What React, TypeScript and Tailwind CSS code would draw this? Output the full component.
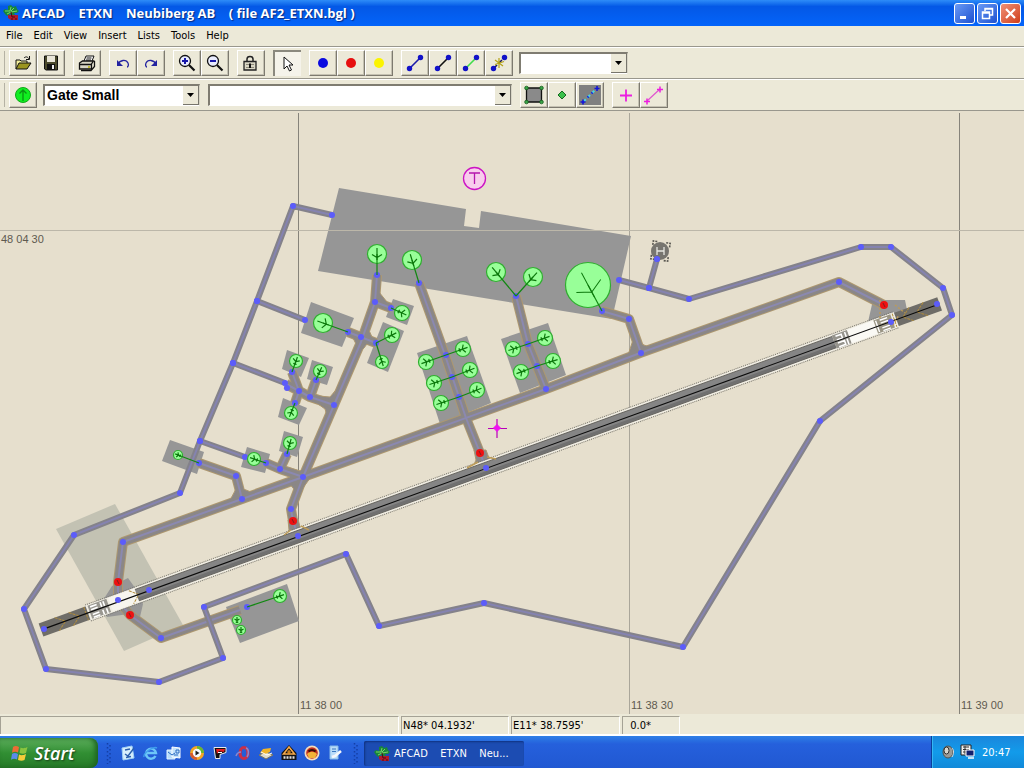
import React from "react";

type Point = [number, number];

const toPoints = (pts: Point[]) => pts.map((p) => p.join(",")).join(" ");

/* ---------- Map data ---------- */

const aprons: Point[][] = [
  [[339, 188], [466, 209], [464, 226], [479, 228], [481, 211], [631, 236], [612, 319], [318, 271]],
  [[311, 302], [354, 318], [342, 347], [301, 333]],
  [[393, 299], [414, 306], [407, 325], [386, 317]],
  [[383, 322], [404, 331], [388, 372], [367, 363]],
  [[417, 353], [467, 336], [491, 403], [440, 424]],
  [[501, 339], [548, 323], [566, 375], [520, 393]],
  [[287, 350], [309, 358], [301, 377], [282, 369]],
  [[312, 360], [333, 367], [327, 385], [307, 379]],
  [[283, 398], [307, 408], [299, 425], [278, 417]],
  [[284, 431], [303, 437], [297, 457], [279, 451]],
  [[247, 447], [270, 454], [265, 473], [241, 467]],
  [[170, 440], [204, 452], [197, 474], [162, 461]],
  [[226, 607], [287, 584], [299, 621], [240, 643], [229, 616]],
  [[873, 300], [905, 300], [907, 310], [896, 322], [868, 322]],
  [[112, 586], [128, 578], [138, 592], [143, 604], [140, 617], [129, 614], [107, 617], [100, 605]],
];

const taxiways: Point[][] = [
  [[118, 600], [118, 582], [123, 542], [242, 499], [303, 477], [546, 389], [640, 353], [839, 282], [884, 305]],
  [[118, 600], [130, 615], [161, 638], [240, 610]],
  [[298, 536], [293, 521], [291, 509], [303, 477], [334, 405], [361, 342], [375, 302], [377, 275]],
  [[375, 302], [391, 308]],
  [[348, 332], [376, 343]],
  [[419, 283], [445, 355], [466, 418], [480, 453], [486, 468]],
  [[516, 296], [528, 344], [546, 389]],
  [[602, 311], [629, 319], [641, 353]],
  [[334, 405], [310, 397], [299, 391], [286, 384]],
  [[292, 372], [299, 391], [295, 403]],
  [[310, 397], [316, 380]],
  [[303, 477], [280, 469], [266, 463]],
  [[280, 469], [287, 454]],
  [[242, 499], [236, 476], [199, 463]],
];

const fillets: Point[][] = [
  [[319, 396], [330, 397], [335, 391], [334, 405], [328, 419], [325, 409], [318, 404]],
  [[290, 468], [300, 471], [309, 462], [313, 474], [303, 488], [297, 493], [289, 483]],
  [[633, 340], [627, 358], [641, 356], [654, 349], [644, 345]],
  [[237, 487], [228, 504], [242, 502], [256, 494], [246, 490]],
  [[379, 292], [387, 302], [376, 309], [370, 319], [372, 302]],
  [[368, 328], [372, 337], [364, 348], [354, 358], [356, 344], [352, 336]],
  [[474, 450], [486, 450], [489, 458], [494, 461], [472, 469], [476, 460]],
  [[288, 520], [298, 519], [300, 527], [307, 531], [286, 538], [289, 530]],
];

const roads: Point[][] = [
  [
    [332, 215], [293, 206], [257, 301], [233, 363], [200, 441], [180, 493], [74, 535], [24, 609],
    [46, 669], [159, 682], [223, 658], [204, 607], [346, 554], [379, 626], [484, 603], [683, 647],
    [820, 421], [952, 315], [943, 288], [891, 247], [861, 247], [689, 299], [649, 288], [619, 280],
  ],
  [[649, 288], [657, 259]],
  [[257, 301], [305, 320]],
  [[233, 363], [285, 383]],
  [[200, 441], [245, 457]],
];

const nodes: Point[] = [
  ...roads.flat(),
  [123, 542], [242, 499], [303, 477], [546, 389], [641, 353], [839, 282], [161, 638], [247, 607],
  [298, 536], [291, 509], [334, 405], [361, 337], [375, 302], [377, 275], [391, 308], [348, 332],
  [376, 343], [419, 283], [446, 355], [452, 377], [459, 397], [486, 468], [516, 296], [528, 344],
  [537, 366], [602, 311], [629, 319], [310, 397], [299, 391], [287, 388], [292, 372], [295, 403],
  [316, 380], [280, 469], [266, 463], [287, 454], [236, 476], [199, 463], [118, 600], [149, 590],
  [44, 629], [937, 304], [891, 322],
];

const holdShorts: Point[] = [[118, 582], [130, 615], [293, 521], [480, 453], [884, 305]];

const parkings: { at: Point; r: number; link?: Point }[] = [
  { at: [377, 254], r: 10, link: [377, 275] },
  { at: [412, 260], r: 10, link: [419, 283] },
  { at: [496, 272], r: 10, link: [516, 296] },
  { at: [533, 277], r: 10, link: [516, 296] },
  { at: [588, 285], r: 23, link: [602, 311] },
  { at: [323, 323], r: 10, link: [348, 332] },
  { at: [402, 313], r: 8, link: [391, 308] },
  { at: [392, 335], r: 8, link: [376, 343] },
  { at: [382, 362], r: 7, link: [376, 343] },
  { at: [426, 362], r: 8, link: [446, 355] },
  { at: [463, 349], r: 8, link: [446, 355] },
  { at: [434, 383], r: 8, link: [452, 377] },
  { at: [470, 370], r: 8, link: [452, 377] },
  { at: [441, 403], r: 8, link: [459, 397] },
  { at: [477, 390], r: 8, link: [459, 397] },
  { at: [513, 349], r: 8, link: [528, 344] },
  { at: [545, 338], r: 8, link: [528, 344] },
  { at: [521, 372], r: 8, link: [537, 366] },
  { at: [553, 361], r: 8, link: [537, 366] },
  { at: [296, 361], r: 7, link: [292, 372] },
  { at: [320, 371], r: 7, link: [316, 380] },
  { at: [291, 413], r: 7, link: [295, 403] },
  { at: [290, 443], r: 7, link: [287, 454] },
  { at: [254, 459], r: 7, link: [266, 463] },
  { at: [178, 455], r: 5, link: [199, 463] },
  { at: [280, 596], r: 7, link: [247, 607] },
  { at: [237, 620], r: 5 },
  { at: [241, 630], r: 5 },
];

function Parking({ at, r, link }: { at: Point; r: number; link?: Point }) {
  const [x, y] = at;
  const angle = link ? (Math.atan2(link[1] - y, link[0] - x) * 180) / Math.PI : 90;
  const root = r >= 10 ? 0.35 * r : 0.1 * r;
  const span = r > 20 ? 0.6 * r : 0.5 * r;
  return (
    <g>
      <circle cx={x} cy={y} r={r - 0.5} fill="#98ff98" stroke="#2fae2f" strokeWidth="1.2" />
      {link && <line x1={x} y1={y} x2={link[0]} y2={link[1]} stroke="#118811" strokeWidth="1.2" />}
      <g transform={`translate(${x} ${y}) rotate(${angle})`} stroke="#0c780c" strokeWidth={r > 20 ? 1 : 1.2} fill="none">
        <path d={`M${-0.6 * r} 0H${0.6 * r}M${root - 0.3 * r} ${-span}L${root} 0L${root - 0.3 * r} ${span}`} />
        {r < 10 && <path d={`M${0.45 * r} ${-0.25 * r}V${0.25 * r}`} />}
      </g>
    </g>
  );
}

function Runway() {
  return (
    <g transform="translate(41 630) rotate(-19.95)">
      <rect x="0" y="-7" width="54" height="14" fill="#6f6d68" />
      <rect x="908" y="-7" width="48" height="14" fill="#6f6d68" />
      <rect x="50" y="-8" width="860" height="16" fill="#f1eee4" />
      <path d="M50-8.500H910M50 8.500H910" stroke="#77756d" strokeDasharray="1 1" />
      <rect x="98" y="-6" width="746" height="12" fill="#858585" />
      <path d="M98 4H844" stroke="#707070" strokeWidth="3" />
      <path d="M98-6H844M98 6H844" stroke="#5c5a55" strokeWidth="0.800" />
      <rect x="52" y="-7" width="20" height="14" fill="#999790" />
      <path d="M54-5h7M54-2h7M54 3h7M54 6h7M65-6v5M68-6v5M65 2v5M69 2v5" stroke="#fff" strokeWidth="1.6" />
      <rect x="74" y="-7" width="28" height="14" fill="#f7f5ee" />
      <rect x="844" y="-7" width="16" height="14" fill="#96948d" />
      <path d="M847-5h6v4h-6M847 2h7v4h-7M857-6v5M857 1v6" stroke="#fff" strokeWidth="1.6" fill="none" />
      <rect x="860" y="-7" width="28" height="14" fill="#faf9f4" />
      <rect x="888" y="-7" width="18" height="14" fill="#9b9685" />
      <path d="M890-6v12M894-5h8M894-2h8M894 3h8M894 6h8" stroke="#fff" strokeWidth="1.4" />
      <path d="M17-7l9 7-9 7M32-7l9 7-9 7M48-7v14M96-7l8 7-8 7M908-7v14M926-7l-9 7 9 7M941-7l-9 7 9 7" stroke="#b08c3c" fill="none" strokeDasharray="3 1" />
      <path d="M4 0H952" stroke="#0b0b0b" strokeWidth="1.1" />
    </g>
  );
}

function AirportMap() {
  return (
    <svg
      className="block min-h-0 w-full flex-1 bg-[#e6dfcd] font-['Liberation_Sans',sans-serif]"
      viewBox="0 111 1024 603"
      preserveAspectRatio="xMinYMin slice"
      role="img"
      aria-label="Airport map"
    >
      <polygon points="56,529 115,504 183,625 124,651" fill="#c3c2b3" />
      <g stroke="#86837a" shapeRendering="crispEdges">
        <path d="M298.5 113V714M959.5 113V714" />
        <path d="M629.5 113V714" stroke="#aaa69a" />
      </g>
      <g fill="#969696">
        {aprons.map((a, i) => (
          <polygon key={i} points={toPoints(a)} />
        ))}
      </g>
      <path d="M0 230.5H1024" stroke="#bcb7a9" shapeRendering="crispEdges" />
      <g fill="none" strokeLinejoin="round">
        {taxiways.map((t, i) => (
          <polyline key={i} points={toPoints(t)} stroke="#ad9870" strokeWidth="10" />
        ))}
        <g fill="#8b8786" stroke="#ad9870" strokeWidth="1">
          {fillets.map((f, i) => (
            <polygon key={i} points={toPoints(f)} />
          ))}
        </g>
        {taxiways.map((t, i) => (
          <polyline key={i} points={toPoints(t)} stroke="#8b8786" strokeWidth="8" />
        ))}
        {taxiways.map((t, i) => (
          <polyline key={i} points={toPoints(t)} stroke="#8b89b0" strokeWidth="2" />
        ))}
        {roads.map((t, i) => (
          <polyline key={i} points={toPoints(t)} stroke="#84828a" strokeWidth="6" />
        ))}
        {roads.map((t, i) => (
          <polyline key={i} points={toPoints(t)} stroke="#8583b0" strokeWidth="2" />
        ))}
      </g>
      <Runway />
      <g fill="none" stroke="#bd9b57" strokeWidth="1.5">
        <path d="M284 535L291 530M301 526L309 530M467 468L478 462M487 457L496 459" />
        <path d="M880 300v18M895 305l10 8M893 325l6-10" strokeDasharray="2 2" />
      </g>
      <g fill="#5c5cfa">
        {nodes.map(([x, y], i) => (
          <circle key={i} cx={x} cy={y} r="3" />
        ))}
      </g>
      {parkings.map((p, i) => (
        <Parking key={i} {...p} />
      ))}
      {holdShorts.map(([x, y]) => (
        <g key={x}>
          <circle cx={x} cy={y} r="4" fill="#ee1111" />
          <path d={`M${x - 1} ${y - 2}L${x + 1} ${y + 2}`} stroke="#7d2020" />
        </g>
      ))}
      <g>
        <path d="M652 246v-4h4M665 242h4v4M669 256v4h-4M656 260h-4v-4" fill="none" stroke="#5a5852" strokeWidth="1.6" strokeDasharray="2 1" transform="rotate(8 660 251)" />
        <circle cx="660" cy="251" r="9" fill="#77756f" />
        <path d="M657 247V255M664 247V255M657 251H664" stroke="#e6e6e0" strokeWidth="1.3" fill="none" />
        <circle cx="657" cy="259" r="3" fill="#5c5cfa" />
      </g>
      <circle cx="474.500" cy="178.500" r="11" fill="#f8cdec" stroke="#cc14c4" strokeWidth="1.3" />
      <path d="M469 173H480M474.500 173V184" stroke="#b516ad" strokeWidth="1.3" />
      <path d="M488 428.500H507M497 419V438" stroke="#b800b8" strokeWidth="1.2" />
      <path d="M497 424.500l3.500 3.500-3.500 3.500-3.500-3.500z" fill="#f012f0" stroke="#f012f0" />
      <g fontSize="11" fill="#5e5a50">
        <text x="1" y="243">48 04 30</text>
        <text x="300" y="709">11 38 00</text>
        <text x="631" y="709">11 38 30</text>
        <text x="961" y="709">11 39 00</text>
      </g>
    </svg>
  );
}

/* ---------- Icons ---------- */

function Icon({ children, size = 22 }: { children: React.ReactNode; size?: number }) {
  return (
    <svg width={size} height={size} viewBox={`0 0 ${size} ${size}`} fill="none" aria-hidden="true" className="shrink-0">
      {children}
    </svg>
  );
}

const PalmIcon = () => (
  <Icon size={16}>
    <path d="M0 6l2-2 3 1V1l3-1 2 2 3-1 1 3 2 2-2 2-3 0 1 2-3 1-2-2-3 2-2-2z" fill="#17873a" />
    <path d="M2 6l5 0 1-4M8 6l3-3M8 7l6-1M4 9l4-2" stroke="#7ed268" />
    <path d="M5 10h10v5H8l-3-2z" fill="#b31a2c" />
    <path d="M8 7l1 5M9 12h3M8 14h2M12 14h2" stroke="#4d0a12" />
  </Icon>
);
const OpenIcon = () => (
  <Icon>
    <path d="M4 17V8h4l1 1h6v3" fill="#f3ef9c" stroke="#111" />
    <path d="M4 17l3-6h12l-4 6z" fill="#9a9420" stroke="#111" />
    <path d="M12 6c2-2 4-1 5 1M17.500 4v3.500H14" stroke="#111" />
  </Icon>
);
const SaveIcon = () => (
  <Icon>
    <path d="M4.500 4h13v14H6l-1.500-1z" fill="#4b4a2c" stroke="#111" />
    <path d="M7 4h8v6H7z" fill="#e9e6d9" />
    <path d="M7 12h8v6H7z" fill="#111" />
    <path d="M12 13h2v4h-2z" fill="#eee" />
  </Icon>
);
const PrintIcon = () => (
  <Icon>
    <path d="M8 9l2-5h8l-2 5" fill="#fff" stroke="#111" />
    <path d="M10.500 6h5M10 8h5" stroke="#111" />
    <path d="M3.500 11l3-2h11l-2 3v5h-12z" fill="#d8d5c5" stroke="#111" strokeWidth="1.3" />
    <path d="M3.500 12.500h12M5 18.500h10l3.500-4V9" stroke="#111" strokeWidth="1.3" />
    <path d="M12 15h2" stroke="#b9b000" strokeWidth="1.5" />
  </Icon>
);
const UndoIcon = () => (
  <Icon>
    <path d="M6 12c2-4 8-5 10-1 1 2 0 4-1 4" stroke="#2323a0" strokeWidth="1.3" />
    <path d="M5 8v6h6z" fill="#2323a0" />
  </Icon>
);
const RedoIcon = () => (
  <Icon>
    <path d="M16 12c-2-4-8-5-10-1-1 2 0 4 1 4" stroke="#2323a0" strokeWidth="1.3" />
    <path d="M17 8v6h-6z" fill="#2323a0" />
  </Icon>
);
const ZoomIcon = ({ plus = false }: { plus?: boolean }) => (
  <Icon>
    <circle cx="9" cy="9" r="5.500" fill="#e9ecff" stroke="#111" strokeWidth="1.3" />
    <path d="M13 13l5.500 5.500" stroke="#111" strokeWidth="2.200" />
    <path d={plus ? "M6 9h6M9 6v6" : "M6 9h6"} stroke="#1717a8" strokeWidth="2" />
  </Icon>
);
const LockIcon = () => (
  <Icon>
    <path d="M7 10V7c0-3.500 6-3.500 6 0v3" stroke="#222" strokeWidth="1.500" />
    <path d="M4 9.500h12v8.500H4z" fill="#d9d6c4" stroke="#222" strokeWidth="1.300" />
    <path d="M6 12.500h8M6 15.500h8" stroke="#8b8878" />
    <path d="M10 11.500v4.500" stroke="#111" strokeWidth="2" />
  </Icon>
);
const CursorIcon = () => (
  <Icon>
    <path d="M7 4v12l3-3 2.500 5 2-1-2.500-5h4z" fill="#fff" stroke="#111" />
  </Icon>
);
const DotIcon = ({ fill }: { fill: string }) => (
  <Icon>
    <circle cx="11" cy="11" r="5" fill={fill} />
  </Icon>
);
const LinkIcon = ({ stroke, cross = false }: { stroke: string; cross?: boolean }) => (
  <Icon>
    <path d="M5.500 16.500L16.500 5.500" stroke={stroke} strokeWidth="1.600" strokeDasharray={cross ? "5 2" : undefined} />
    <circle cx="5.500" cy="16.500" r="2.700" fill="#1212c8" />
    <circle cx="16.500" cy="5.500" r="2.700" fill="#1212c8" />
    {cross && <path d="M7 8l8 6M11 6v10M7 12.500l9-3" stroke="#b5a316" strokeWidth="1.200" />}
  </Icon>
);
const GateIcon = () => (
  <Icon>
    <circle cx="11" cy="11" r="7.500" fill="#10ee20" stroke="#10a818" />
    <path d="M11 17V6M7.500 9.500L11 6l3.500 3.500" stroke="#0a9412" strokeWidth="1.300" />
  </Icon>
);
const ApronIcon = () => (
  <Icon>
    <path d="M3.500 4h15v14h-15z" fill="#8a8a8a" stroke="#111" strokeWidth="1.300" />
    <g fill="#3aa648" stroke="#155a1d" strokeWidth="0.800">
      <circle cx="3.500" cy="4" r="1.800" />
      <circle cx="18.500" cy="4" r="1.800" />
      <circle cx="3.500" cy="18" r="1.800" />
      <circle cx="18.500" cy="18" r="1.800" />
    </g>
  </Icon>
);
const DiamondIcon = () => (
  <Icon>
    <path d="M11 7l4 4-4 4-4-4z" fill="#3cc04c" stroke="#17691f" />
  </Icon>
);
const EdgeIcon = () => (
  <Icon>
    <path d="M0 1h22v20H0z" fill="#808080" />
    <path d="M4 18L18 4" stroke="#4ad6e0" strokeWidth="2" strokeDasharray="4 2" />
    <path d="M1.500 18h5M4 15.500v5M15.500 4.500h5M18 2v5" stroke="#1414d8" strokeWidth="1.600" />
    <path d="M8.500 13.500l1-1M12.500 9.500l1-1" stroke="#1414d8" strokeWidth="2" />
  </Icon>
);
const PlusIcon = () => (
  <Icon>
    <path d="M5 11.500h12M11 5.500v12" stroke="#ec1ee0" strokeWidth="1.800" />
  </Icon>
);
const PlusLineIcon = () => (
  <Icon>
    <path d="M4 17L17 5" stroke="#e055cf" strokeWidth="1.200" />
    <path d="M1 17.500h6M4 14.500v6M14 5.500h6M17 2.500v6" stroke="#ec1ee0" strokeWidth="1.500" />
  </Icon>
);

/* ---------- Toolbar parts ---------- */

function ToolButton({ label, children, pressed = false }: { label: string; children: React.ReactNode; pressed?: boolean }) {
  return (
    <button
      type="button"
      aria-label={label}
      title={label}
      className={
        "flex h-[26px] w-7 items-center justify-center " +
        (pressed
          ? "border-t-2 border-l-2 border-t-[#8b897e] border-l-[#8b897e] bg-[#f5f3ea]"
          : "border-t border-r border-b border-l border-t-white border-r-[#7d7a6f] border-b-[#7d7a6f] border-l-white bg-[#ece9d8] shadow-[inset_-1px_-1px_0_#c4c1b2]")
      }
    >
      {children}
    </button>
  );
}

function Combo({ label, value, className }: { label: string; value: string; className: string }) {
  return (
    <div className={"grid h-[22px] border-t-2 border-r border-b border-l-2 border-t-[#7f7c71] border-r-[#d8d5c6] border-b-white border-l-[#7f7c71] bg-white " + className}>
      <select
        aria-label={label}
        defaultValue={value}
        className="col-start-1 row-start-1 h-full w-full appearance-none bg-white pr-4 pb-0.5 pl-0.5 font-['Liberation_Sans',sans-serif] text-sm leading-4 font-bold text-black"
      >
        <option value={value}>{value}</option>
      </select>
      <span
        aria-hidden="true"
        className="pointer-events-none col-start-1 row-start-1 flex w-4 items-center justify-center justify-self-end border-r border-b border-r-[#77756c] border-b-[#77756c] bg-[#ece9d8]"
      >
        <svg width="7" height="4" viewBox="0 0 7 4">
          <path d="M0 0h7L3.500 4z" fill="#000" />
        </svg>
      </span>
    </div>
  );
}

const Group = ({ children }: { children: React.ReactNode }) => <div className="flex">{children}</div>;

const Toolbar = ({ label, children }: { label: string; children: React.ReactNode }) => (
  <div role="toolbar" aria-label={label} className="flex h-8 shrink-0 items-center gap-2 border-t border-b border-t-white border-b-[#99978d] pl-1">
    <span className="-mr-1 h-6 w-px bg-[#b5b2a4]" />
    {children}
  </div>
);

const menus = ["File", "Edit", "View", "Insert", "Lists", "Tools", "Help"];

function CaptionButton({ label, close = false, children }: { label: string; close?: boolean; children: React.ReactNode }) {
  return (
    <button
      type="button"
      aria-label={label}
      className={
        "flex size-[21px] items-center justify-center rounded-[3px] border border-white bg-linear-to-br " +
        (close ? "from-[#ef9074] to-[#cf3a12]" : "from-[#6b9af5] to-[#1d4fd0]")
      }
    >
      <svg width="15" height="15" viewBox="0 0 15 15" fill="none" stroke="#fff" aria-hidden="true">
        {children}
      </svg>
    </button>
  );
}

/* ---------- Taskbar ---------- */

const quickLaunch: { name: string; art: React.ReactNode }[] = [
  { name: "Show Desktop", art: <><path d="M2 3l10-2 2 12-11 2z" fill="#d7eefc" stroke="#9fd0f5" /><path d="M5 5l5-1M5 9l3 2 6-8M6 12.500l5-1" stroke="#2a5fae" strokeWidth="1.400" /></> },
  { name: "Internet Explorer", art: <><path d="M12.500 11a5 5 0 1 1 .5-3H4" stroke="#6cc6f8" strokeWidth="2.400" /><path d="M1 12c-1-4 9-11 13-9" stroke="#3f9fec" strokeWidth="1.400" /></> },
  { name: "Outlook Express", art: <><path d="M1 5h8v9H1z" fill="#b6dcfa" stroke="#e3f3ff" /><path d="M6 2l8 1v10l-8-1z" fill="#c3e2fb" stroke="#fff" /><path d="M10 5h3v3h-3zM2 7l4 3 3-2M8 10h4" stroke="#2a6ac0" /></> },
  { name: "Media Player", art: <><circle cx="8" cy="8" r="7" fill="#f5a623" /><path d="M8 1A7 7 0 0 1 15 8H8z" fill="#68b82e" /><path d="M1 8A7 7 0 0 0 8 15V8z" fill="#d85a2d" /><circle cx="8" cy="8" r="4.200" fill="#f7faff" /><path d="M6.500 5.500l4 2.500-4 2.500z" fill="#222" /></> },
  { name: "Player", art: <><path d="M2 2.500h12v5L8 9.500v4H3.500z" fill="#111" stroke="#e9e9e9" /><path d="M4 4h9l-1 3-5-1-2 3z" fill="#e81c1c" /><path d="M6 7.500h4" stroke="#fff" /></> },
  { name: "Opera", art: <><ellipse cx="9" cy="8" rx="4" ry="5.500" stroke="#c8304a" strokeWidth="3.200" /><path d="M1 11c1-3 3-4 5-4M11 3c3 1 3 6 1 9" stroke="#8a86cc" strokeWidth="1.500" /></> },
  { name: "Scanner", art: <><path d="M1 10l7-3 7 3-7 4z" fill="#e0dccb" stroke="#7b735c" /><path d="M5 4l8-1-1 4-5 2-5-1z" fill="#f0b429" /><path d="M3 7l6 3 5-2" stroke="#fff" /></> },
  { name: "Home Tool", art: <><path d="M8 0l7.500 8v7H.5V8z" fill="#111" /><path d="M8 2l5.500 7h-11z" stroke="#f5a94a" strokeWidth="1.600" /><path d="M8 5v4M6 7h4" stroke="#f59b22" strokeWidth="1.200" /><path d="M2.500 12.500h11" stroke="#ddd" strokeWidth="2.500" strokeDasharray="2 1" /></> },
  { name: "Messenger", art: <><circle cx="8" cy="8" r="7.500" fill="#f4dcbc" /><circle cx="8" cy="8" r="5.800" fill="#c3301c" /><path d="M3 9c3-3 7-3 10 0l-2 4H5z" fill="#f2b338" /><path d="M4.500 6.500c2-2 5-2 7 0" stroke="#3a0d08" strokeWidth="2.200" /></> },
  { name: "Notes", art: <><path d="M3 1h8v13H3z" fill="#b9dbf8" stroke="#87bbe8" /><path d="M5 4h4M5 6.500h4" stroke="#3a77c0" /><path d="M14 6l-6 5-3 1" stroke="#f5f7fa" strokeWidth="2.600" /></> },
];

const Grip = () => (
  <svg width="5" height="22" viewBox="0 0 5 22" aria-hidden="true">
    <path d="M1.500 1V22M4 3V22" stroke="#143fa6" strokeWidth="1.500" strokeDasharray="1.500 2.500" />
  </svg>
);

function Taskbar() {
  return (
    <footer className="flex h-8 shrink-0 items-stretch bg-linear-to-b from-[#2f7fe6] via-[#2560dc] via-25% to-[#2158d2] text-white">
      <button
        type="button"
        className="mt-0.5 flex w-[98px] items-center gap-1 rounded-r-lg bg-linear-to-b from-[#5cae5c] via-[#318f33] to-[#267a28] pl-2.5 font-['Open_Sans',sans-serif] text-lg leading-5 font-semibold italic shadow-[inset_-3px_0_5px_#1e6420] [text-shadow:1px_1px_2px_#173f17]"
      >
        <Icon size={20}>
          <path d="M3 4c2-1.500 4-1 6 0L8 9.500c-2-1-4-1-6 .3z" fill="#ee6c35" />
          <path d="M10.500 4.500c2 1 4 1 7-.5l-1.500 6c-2 1-4 1-6.500 0z" fill="#8ac43f" />
          <path d="M2 11c2-1.500 4-1 6 0L7 16.500c-2-1-4-1-6 .3z" fill="#5a8bea" />
          <path d="M9 11.500c2 1 4 1 7-.5l-1.500 6c-2 1-4 1-6.500 0z" fill="#f6cc3a" />
        </Icon>
        Start
      </button>
      <div className="flex items-center pt-0.5 pl-2">
        <Grip />
        <div className="flex items-center gap-[7px] pl-[9px]">
          {quickLaunch.map((q) => (
            <button key={q.name} type="button" aria-label={q.name} title={q.name}>
              <Icon size={16}>{q.art}</Icon>
            </button>
          ))}
        </div>
        <span className="w-2.5" />
        <Grip />
      </div>
      <button
        type="button"
        className="mt-[5px] mb-0.5 ml-1.5 flex w-40 items-center gap-1 rounded-xs bg-[#1c4cb2] pl-2.5 font-['DejaVu_Sans_Condensed','DejaVu_Sans',sans-serif] text-[11px] leading-4 whitespace-pre shadow-[inset_1px_1px_2px_#10317f]"
      >
        <PalmIcon />
        {"AFCAD    ETXN    Neu..."}
      </button>
      <div className="ml-auto flex w-[93px] items-center gap-1 border-l border-[#0b3f9c] bg-linear-to-b from-[#1a86dc] via-[#129bea] to-[#1189d9] pl-2 font-['DejaVu_Sans_Condensed','DejaVu_Sans',sans-serif] text-[11px] leading-4 shadow-[inset_1px_0_0_#35b7f3]">
        <Icon size={16}>
          <ellipse cx="8" cy="8" rx="5" ry="6" fill="#9a9a96" stroke="#55544e" />
          <ellipse cx="6.500" cy="6.500" rx="2.500" ry="3.500" fill="#d9d7cd" stroke="#333" />
          <path d="M12 4c2 2 2 6 0 9" stroke="#ddd" />
        </Icon>
        <Icon size={16}>
          <path d="M1 1h10v10H1z" fill="#f0f0ee" stroke="#222" />
          <path d="M3 3h6M3 5.500h6M3 8h6M5 2v8" stroke="#333" />
          <path d="M6 6h8v6H6z" fill="#12206e" stroke="#fff" />
          <path d="M8 14h6" stroke="#fff" strokeWidth="1.500" />
        </Icon>
        <time className="pt-0.5 pl-0.5">20:47</time>
      </div>
    </footer>
  );
}

const paneClass = "h-[18px] border-t border-l border-t-[#a5a295] border-l-[#a5a295] border-r border-r-white pt-px pl-px";

export default function App() {
  return (
    <div className="flex h-screen w-full flex-col overflow-hidden bg-[#ece9d8] font-['DejaVu_Sans_Condensed','DejaVu_Sans',sans-serif] text-[11px] leading-4 text-black">
      <header className="flex h-[26px] shrink-0 items-center bg-linear-to-b from-[#2e8cf8] via-[#0458e6] via-25% to-[#0464fa] pr-[3px] pl-[3px] text-white">
        <PalmIcon />
        <h1 className="pl-[3px] font-['Open_Sans',sans-serif] text-[13px] leading-5 font-bold whitespace-pre [text-shadow:1px_1px_1px_#0a2a80]">
          {"AFCAD    ETXN    Neubiberg AB    ( file AF2_ETXN.bgl )"}
        </h1>
        <div className="ml-auto flex gap-0.5">
          <CaptionButton label="Minimize">
            <path d="M3 11.500h6" strokeWidth="3" />
          </CaptionButton>
          <CaptionButton label="Restore">
            <path d="M5 5V2.500h7.500V9H10M5 3h8" strokeWidth="1.500" />
            <path d="M2.500 6h7v6.500h-7zM2 7h8" strokeWidth="1.500" />
          </CaptionButton>
          <CaptionButton label="Close" close>
            <path d="M3 3l9 9M12 3l-9 9" strokeWidth="2.200" />
          </CaptionButton>
        </div>
      </header>

      <nav aria-label="Main menu" className="flex h-[21px] shrink-0 items-center gap-[11px] border-b border-b-[#99978d] pl-1.5">
        {menus.map((m) => (
          <button key={m} type="button">
            {m}
          </button>
        ))}
      </nav>

      <Toolbar label="Standard">
        <Group>
          <ToolButton label="Open"><OpenIcon /></ToolButton>
          <ToolButton label="Save"><SaveIcon /></ToolButton>
        </Group>
        <ToolButton label="Print"><PrintIcon /></ToolButton>
        <Group>
          <ToolButton label="Undo"><UndoIcon /></ToolButton>
          <ToolButton label="Redo"><RedoIcon /></ToolButton>
        </Group>
        <Group>
          <ToolButton label="Zoom in"><ZoomIcon plus /></ToolButton>
          <ToolButton label="Zoom out"><ZoomIcon /></ToolButton>
        </Group>
        <ToolButton label="Lock"><LockIcon /></ToolButton>
        <ToolButton label="Select" pressed><CursorIcon /></ToolButton>
        <Group>
          <ToolButton label="Blue node"><DotIcon fill="#0a0ae0" /></ToolButton>
          <ToolButton label="Red node"><DotIcon fill="#e60f0f" /></ToolButton>
          <ToolButton label="Yellow node"><DotIcon fill="#fbf400" /></ToolButton>
        </Group>
        <div className="flex items-center gap-1.5">
          <Group>
            <ToolButton label="Taxi link"><LinkIcon stroke="#1c1ca8" /></ToolButton>
            <ToolButton label="Runway link"><LinkIcon stroke="#111111" /></ToolButton>
            <ToolButton label="Parking link"><LinkIcon stroke="#3fdc4c" /></ToolButton>
            <ToolButton label="Split link"><LinkIcon stroke="#1c1c60" cross /></ToolButton>
          </Group>
          <Combo label="Taxiway name" value="" className="w-[109px]" />
        </div>
      </Toolbar>

      <Toolbar label="Objects">
        <div className="flex items-center gap-1.5">
          <ToolButton label="Gate"><GateIcon /></ToolButton>
          <Combo label="Parking type" value="Gate Small" className="w-[157px]" />
        </div>
        <Combo label="Parking name" value="" className="w-[304px]" />
        <Group>
          <ToolButton label="Apron"><ApronIcon /></ToolButton>
          <ToolButton label="Apron point"><DiamondIcon /></ToolButton>
          <ToolButton label="Apron edge"><EdgeIcon /></ToolButton>
        </Group>
        <Group>
          <ToolButton label="Add marker"><PlusIcon /></ToolButton>
          <ToolButton label="Add line"><PlusLineIcon /></ToolButton>
        </Group>
      </Toolbar>

      <AirportMap />

      <div role="status" className="flex h-[22px] shrink-0 items-start gap-0.5 border-b-2 border-b-white pt-0.5">
        <span className={paneClass + " w-[399px]"} />
        <span className={paneClass + " w-[108px]"}>N48* 04.1932'</span>
        <span className={paneClass + " w-[109px]"}>E11* 38.7595'</span>
        <span className={paneClass + " w-[58px] whitespace-pre"}>{"  0.0*"}</span>
      </div>

      <Taskbar />
    </div>
  );
}
